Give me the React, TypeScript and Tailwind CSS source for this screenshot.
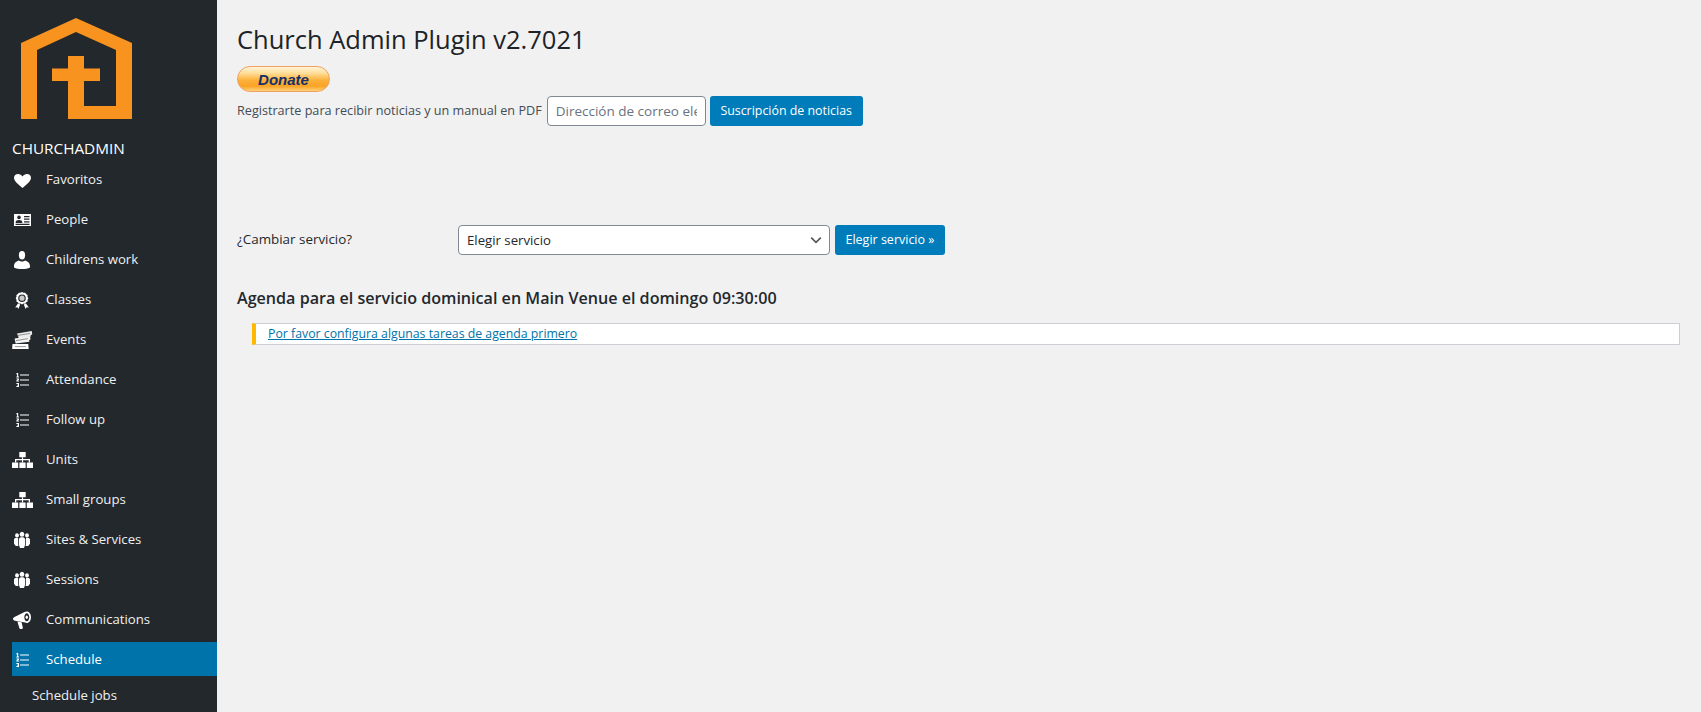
import React from "react";

const W = "#ffffff";
const D = "#23282d";

function Box({ children }: { children: React.ReactNode }) {
  return (
    <svg viewBox="0 0 22 22" className="w-[22px] h-[22px] block" fill={W}>
      {children}
    </svg>
  );
}

function Heart() {
  return (
    <Box>
      <path d="M10.500 20C7.500 17.400 2 13.600 2 9.800 2 7.400 3.800 6 6 6c2 0 3.500 1 4.500 2.400C11.500 7 13 6 15 6c2.200 0 4 1.400 4 3.800 0 3.800-5.500 7.600-8.500 10.200z" />
    </Box>
  );
}
function IdCard() {
  return (
    <Box>
      <path d="M2 6h17v12H2z" />
      <circle cx="7" cy="9.400" r="1.800" fill={D} />
      <path d="M3.600 15c0-2.400 1.400-3 3.400-3s3.400.6 3.400 3z" fill={D} />
      <path d="M12 8h5.500v1.200H12zM12 10.600h5.500v1.200H12zM12 13.200h5.500v1.200H12zM3.600 15.800h13.900V17H3.600z" fill={D} />
    </Box>
  );
}
function Person() {
  return (
    <Box>
      <ellipse cx="10" cy="7.200" rx="3.100" ry="4.200" />
      <path d="M2 18c0-3.400 2.700-5 5-5.600.8.800 1.800 1.100 3 1.100s2.200-.3 3-1.100c2.300.6 5 2.200 5 5.600v1.400c-2 1.200-4.800 1.600-8 1.600s-6-.4-8-1.600z" />
    </Box>
  );
}
function Award() {
  return (
    <Box>
      <path fillRule="evenodd" d="M10 4l1.500.8 1.700-.1.9 1.400 1.500.9-.1 1.700.8 1.500-.8 1.500.1 1.700-1.500.9-.9 1.400-1.700-.1-1.500.8-1.500-.8-1.700.1-.9-1.400-1.500-.9.1-1.700-.8-1.500.8-1.500-.1-1.700 1.500-.9.900-1.400 1.700.1zM10 6.400a3.800 3.800 0 100 7.600 3.800 3.800 0 000-7.600z" />
      <circle cx="10" cy="10.200" r="2.600" fill="#c9c9c9" />
      <path d="M6 15.400l2.200 1-1.800 4.600-1-1.800-2.200.3zM14 15.400l-2.200 1 1.800 4.600 1-1.800 2.200.3z" />
    </Box>
  );
}
function Tickets() {
  return (
    <Box>
      <path d="M5 5.400L19.800 3l.4 3.400-1.600.5.300 1.700L7 10.600z" fill="#ececec" />
      <path d="M2.600 10.600l15.400-2.300.5 3.300-1.400.5.300 1.600L3.600 15.600z" fill="#f3f3f3" />
      <path d="M.4 16.200l1-.2h14.800l.5 5H.2z" />
      <path d="M6 7.400l12-2M4 12.600l12-2M3 18.600h11" stroke="#7a7a7a" strokeWidth=".8" fill="none" />
    </Box>
  );
}
function OrderedList() {
  return (
    <Box>
      <path d="M8 6.400h9v1H8zM8 11.500h9v1H8zM8 16.500h9v1H8z" />
      <path d="M4.800 5h1.400v3.400H7v1H4.400v-1h.7V6.200l-.7.300V5.600zM4.400 10.400h2.600v1.300l-1.200 1h1.200v.9H4.400v-1.200l1.300-1.100H4.400zM4.400 15h2.600v4H4.400v-.9h1.600v-.6H5v-.8h1v-.8H4.400z" />
    </Box>
  );
}
function Network() {
  return (
    <Box>
      <path d="M7.300 4h6.400v5.200H7.300zM0 14.400h6.200V20H0zM7.400 14.400h6.200V20H7.400zM14.800 14.400H21V20h-6.200z" />
      <path d="M9.900 9.200h1.200v1.800H18v3.400h-1.300V12.300h-5.600v2.100H9.900v-2.100H4.300v2.100H3V11h6.900z" />
    </Box>
  );
}
function Groups() {
  return (
    <Box>
      <ellipse cx="10" cy="6.300" rx="2.300" ry="2.500" />
      <ellipse cx="5" cy="7.400" rx="1.900" ry="2.100" />
      <ellipse cx="15" cy="7.400" rx="1.900" ry="2.100" />
      <path d="M6.800 11c.7-1.300 1.900-1.700 3.200-1.700s2.500.4 3.200 1.700v5.400L12 20H8l-1.200-3.600z" />
      <path d="M2 11.400c.5-1.200 1.700-1.600 3-1.600.3 0 .7 0 1 .1v6.600l.5 1.500H3.800L2 15.800zM18 11.400c-.5-1.200-1.700-1.600-3-1.600-.3 0-.7 0-1 .1v6.600l-.5 1.500h2.700l1.800-2.200z" />
    </Box>
  );
}
function Megaphone() {
  return (
    <Box>
      <path fillRule="evenodd" d="M14.800 3.400c2.400 0 4.200 2.600 4.200 5.800s-1.800 5.800-4.200 5.800c-.6 0-1.100-.2-1.600-.5L3 12.800C1.800 12.500 1 11.700 1 10.800c0-.8.800-1.500 2-2L12.600 4c.7-.4 1.400-.6 2.200-.6zM14.800 5.200c-1.400 0-2.500 1.800-2.500 4s1.100 4 2.500 4 2.500-1.800 2.500-4-1.100-4-2.500-4z" />
      <ellipse cx="14.800" cy="9.200" rx="1.200" ry="1.700" />
      <path d="M5.400 13.400l4.200.8 1.200 5.400c.2.800-.3 1.400-1 1.400H8.400c-.5 0-.8-.3-1-.8z" />
    </Box>
  );
}

const items: [string, React.ReactNode][] = [
  ["Favoritos", <Heart />],
  ["People", <IdCard />],
  ["Childrens work", <Person />],
  ["Classes", <Award />],
  ["Events", <Tickets />],
  ["Attendance", <OrderedList />],
  ["Follow up", <OrderedList />],
  ["Units", <Network />],
  ["Small groups", <Network />],
  ["Sites & Services", <Groups />],
  ["Sessions", <Groups />],
  ["Communications", <Megaphone />],
];

function Row({ icon, label, active }: { icon: React.ReactNode; label: string; active?: boolean }) {
  return (
    <div className={active ? "flex items-center h-[34px] mt-[3px] bg-[#0073aa] text-white" : "flex items-center h-[40px] text-[#f0f0f0]"}>
      <span className="w-[34px] shrink-0">{icon}</span>
      <span className="text-[13.200px] leading-[18px]">{label}</span>
    </div>
  );
}

export default function App() {
  return (
    <div className="flex h-[712px] overflow-hidden bg-[#f1f1f1] font-['Open_Sans','Noto_Sans',sans-serif] text-[#23282d]">
      <aside className="w-[217px] shrink-0 bg-[#23282d] pl-[12px] overflow-hidden">
        <svg viewBox="0 0 140 130" className="w-[140px] h-[130px] -ml-[12px] block" fill="#f7931e">
          <path d="M76 18L132 43V119H68V81H52V68.500H68V56H84V68.500H100V81H84V106H116V50L76 32L37 50V119H21V43Z" />
        </svg>
        <div className="text-[15.300px] leading-[20px] font-medium text-white mt-[8px] h-[21px]">CHURCHADMIN</div>
        <div>
          {items.map(([label, icon]) => (
            <Row key={label} label={label} icon={icon} />
          ))}
          <Row label="Schedule" icon={<OrderedList />} active />
          <div className="text-[13.200px] leading-[18px] text-[#f0f0f0] pl-[20px] mt-[10px]">Schedule jobs</div>
        </div>
      </aside>
      <main className="flex-1 min-w-0 pl-[20px] pr-[21px]">
        <h1 className="text-[25.500px] leading-[34px] mt-[22px] font-normal text-[#1d2327]">Church Admin Plugin v2.7021</h1>
        <div className="mt-[10px] w-[93px] h-[26px] rounded-full border border-[#f0a060] bg-[linear-gradient(to_bottom,#fff4d8_0%,#ffdf9a_25%,#fdb03a_55%,#f8a426_80%,#ffd27a_100%)] flex items-center justify-center">
          <span className="font-['Liberation_Sans',sans-serif] italic font-bold text-[15px] leading-none text-[#15306b]">Donate</span>
        </div>
        <div className="flex items-center mt-[4px] h-[30px]">
          <span className="text-[12.630px] text-[#444c54]">Registrarte para recibir noticias y un manual en PDF</span>
          <input readOnly placeholder="Dirección de correo electrónico" className="ml-[5px] w-[159px] h-[30px] rounded-[4px] border border-[#7e8993] bg-white px-[8px] text-[13.500px] placeholder:text-[#6b7280] outline-none" />
          <button className="ml-[4px] h-[30px] w-[153px] rounded-[3px] bg-[#007cba] text-white text-[12.400px]">Suscripción de noticias</button>
        </div>
        <div className="flex items-start mt-[99px]">
          <span className="w-[221px] shrink-0 text-[13.400px] leading-[18px] mt-[5px] text-[#23282d]">¿Cambiar servicio?</span>
          <div className="flex items-center">
            <div className="w-[372px] h-[30px] rounded-[4px] border border-[#7e8993] bg-white flex items-center justify-between pl-[8px] pr-[5px] text-[13.200px]">
              <span className="pt-[1px]">Elegir servicio</span>
              <svg viewBox="0 0 20 20" className="w-[16px] h-[16px]" fill="none" stroke="#555" strokeWidth="2"><path d="M4 7l6 6 6-6" /></svg>
            </div>
            <button className="ml-[5px] h-[30px] w-[110px] rounded-[3px] bg-[#007cba] text-white text-[12.500px]">Elegir servicio »</button>
          </div>
        </div>
        <h2 className="mt-[32px] text-[16.130px] leading-[22px] font-semibold text-[#23282d]">Agenda para el servicio dominical en Main Venue el domingo 09:30:00</h2>
        <div className="mt-[14px] ml-[15px] h-[22px] border border-[#ccd0d4] border-l-[4px] border-l-[#ffb900] bg-white pl-[12px] flex items-center">
          <a href="#" className="text-[12.300px] text-[#0073aa] underline">Por favor configura algunas tareas de agenda primero</a>
        </div>
      </main>
    </div>
  );
}
